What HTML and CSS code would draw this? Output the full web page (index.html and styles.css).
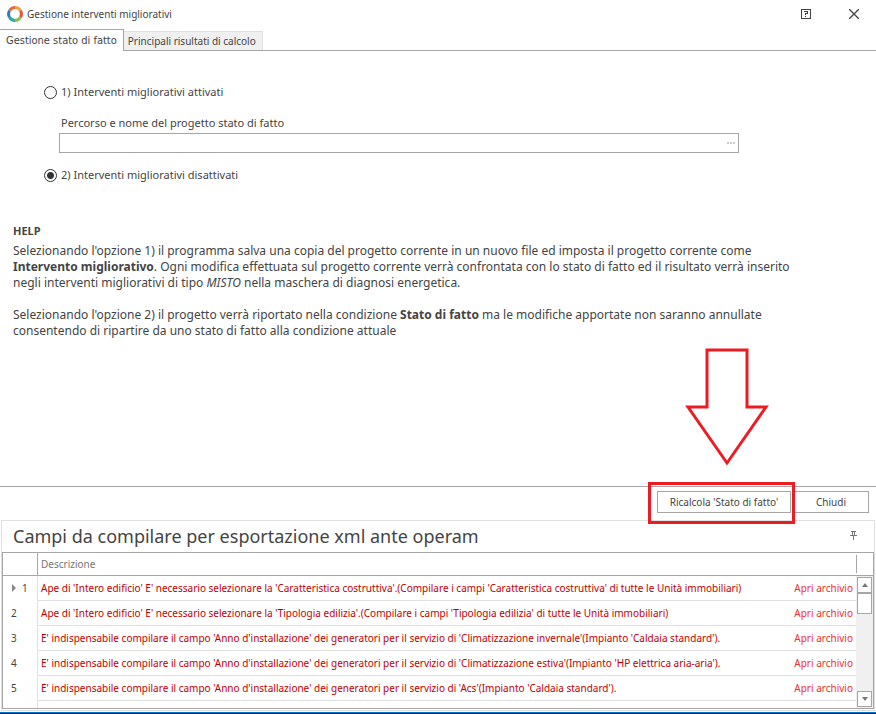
FILE: index.html
```html
<!DOCTYPE html>
<html lang="it">
<head>
<meta charset="UTF-8">
<meta name="viewport" content="width=device-width, initial-scale=1.0">
<title>Gestione interventi migliorativi</title>
<link rel="stylesheet" href="styles.css">
</head>
<body>

<header class="titlebar">
  <svg class="logo" width="16" height="16" viewBox="0 0 16 16" fill="none" stroke-width="3">
    <path d="M8 1.6A6.4 6.4 0 0 1 13.5 4.8" stroke="#f0a040"/>
    <path d="M13.5 4.8A6.4 6.4 0 0 1 13.5 11.2" stroke="#e0563c"/>
    <path d="M13.5 11.2A6.4 6.4 0 0 1 8 14.4" stroke="#8cbf4e"/>
    <path d="M8 14.4A6.4 6.4 0 0 1 2.5 11.2" stroke="#2fa8a0"/>
    <path d="M2.5 11.2A6.4 6.4 0 0 1 2.5 4.8" stroke="#2b7fb5"/>
    <path d="M2.5 4.8A6.4 6.4 0 0 1 8 1.6" stroke="#e56a3c"/>
  </svg>
  <h1>Gestione interventi migliorativi</h1>
  <button class="window-button" aria-label="Guida">
    <svg width="10" height="10" viewBox="0 0 10 10" fill="#444" shape-rendering="crispEdges">
      <path d="M0 0H10V10H0ZM1 1V9H9V1Z" fill-rule="evenodd"/>
      <path d="M3 2H7V5H5V6H4V4H6V3H3ZM4 7H5V8H4Z"/>
    </svg>
  </button>
  <button class="window-button" aria-label="Chiudi finestra">
    <svg width="10" height="10" viewBox="0 0 10 10" stroke="#444" stroke-width="1.3">
      <path d="M0 0L10 10M10 0L0 10"/>
    </svg>
  </button>
</header>

<nav class="tabs" role="tablist">
  <button class="tab active" role="tab" aria-selected="true">Gestione stato di fatto</button>
  <button class="tab" role="tab" aria-selected="false">Principali risultati di calcolo</button>
</nav>

<main>
  <form class="options">
    <label class="option"><input type="radio" name="interventi" value="1"> 1) Interventi migliorativi attivati</label>
    <div class="field">
      <label for="percorso">Percorso e nome del progetto stato di fatto</label>
      <div class="path-box">
        <input type="text" id="percorso">
        <button type="button" aria-label="Sfoglia">
          <svg width="8" height="2" viewBox="0 0 8 2" fill="#ccc"><path d="M0 0H2V2H0ZM3 0H5V2H3ZM6 0H8V2H6Z"/></svg>
        </button>
      </div>
    </div>
    <label class="option"><input type="radio" name="interventi" value="2" checked> 2) Interventi migliorativi disattivati</label>
  </form>

  <section class="help">
    <h2>HELP</h2>
    <p>Selezionando l'opzione 1) il programma salva una copia del progetto corrente in un nuovo file ed imposta il progetto corrente come<br>
    <strong>Intervento migliorativo</strong>. Ogni modifica effettuata sul progetto corrente verrà confrontata con lo stato di fatto ed il risultato verrà inserito<br>
    negli interventi migliorativi di tipo <em>MISTO</em> nella maschera di diagnosi energetica.</p>
    <p>Selezionando l'opzione 2) il progetto verrà riportato nella condizione <strong>Stato di fatto</strong> ma le modifiche apportate non saranno annullate<br>
    consentendo di ripartire da uno stato di fatto alla condizione attuale</p>
  </section>
</main>

<div class="actions">
  <div class="highlight">
    <svg class="arrow" width="84" height="118" viewBox="0 0 84 118" fill="none" stroke="#ed1c24" stroke-width="3">
      <path d="M22 2H62V59H81L42 115L3 59H22Z"/>
    </svg>
    <button class="action recalc">Ricalcola 'Stato di fatto'</button>
  </div>
  <button class="action">Chiudi</button>
</div>

<section class="panel">
  <div class="panel-header">
    <h2>Campi da compilare per esportazione xml ante operam</h2>
    <button class="pin" aria-label="Blocca pannello">
      <svg width="7" height="9" viewBox="0 0 7 9" fill="#777" shape-rendering="crispEdges">
        <path d="M1 0H6V1H5V4H7V5H4V9H3V5H0V4H2V1H1ZM3 1V4H4V1Z" fill-rule="evenodd"/>
      </svg>
    </button>
  </div>
  <div class="grid">
    <table>
      <thead>
        <tr><th class="num"></th><th class="desc">Descrizione</th><th class="link"></th><th class="gutter"></th></tr>
      </thead>
      <tbody>
        <tr>
          <td class="num current">1</td>
          <td>Ape di 'Intero edificio' E' necessario selezionare la 'Caratteristica costruttiva'.(Compilare i campi 'Caratteristica costruttiva' di tutte le Unità immobiliari)</td>
          <td class="link"><a href="#">Apri archivio</a></td><td></td>
        </tr>
        <tr>
          <td class="num">2</td>
          <td>Ape di 'Intero edificio' E' necessario selezionare la 'Tipologia edilizia'.(Compilare i campi 'Tipologia edilizia' di tutte le Unità immobiliari)</td>
          <td class="link"><a href="#">Apri archivio</a></td><td></td>
        </tr>
        <tr>
          <td class="num">3</td>
          <td>E' indispensabile compilare il campo 'Anno d'installazione' dei generatori per il servizio di 'Climatizzazione invernale'(Impianto 'Caldaia standard').</td>
          <td class="link"><a href="#">Apri archivio</a></td><td></td>
        </tr>
        <tr>
          <td class="num">4</td>
          <td>E' indispensabile compilare il campo 'Anno d'installazione' dei generatori per il servizio di 'Climatizzazione estiva'(Impianto 'HP elettrica aria-aria').</td>
          <td class="link"><a href="#">Apri archivio</a></td><td></td>
        </tr>
        <tr>
          <td class="num">5</td>
          <td>E' indispensabile compilare il campo 'Anno d'installazione' dei generatori per il servizio di 'Acs'(Impianto 'Caldaia standard').</td>
          <td class="link"><a href="#">Apri archivio</a></td><td></td>
        </tr>
        <tr>
          <td class="num"></td><td></td><td></td><td></td>
        </tr>
      </tbody>
    </table>
    <div class="scrollbar">
      <button aria-label="Scorri su"><svg width="6" height="4" viewBox="0 0 6 4" fill="#777"><path d="M0 4L3 0L6 4Z"/></svg></button>
      <div class="thumb"></div>
      <button class="down" aria-label="Scorri giù"><svg width="6" height="4" viewBox="0 0 6 4" fill="#777"><path d="M0 0L3 4L6 0Z"/></svg></button>
    </div>
  </div>
</section>

<div class="taskbar"></div>

</body>
</html>
```
FILE: styles.css
```css
* {
  box-sizing: border-box;
}
body {
  display: flex;
  flex-direction: column;
  min-height: 100vh;
  margin: 0;
  font-family: "Noto Sans", Tahoma, sans-serif;
  font-size: 10px;
  line-height: 16px;
  color: #444;
  background-color: #fff;
}
button, input {
  font: inherit;
  color: inherit;
}
button {
  padding: 0;
  border: none;
  background: none;
}
svg {
  display: block;
}
h1, h2, p {
  margin: 0;
}
.titlebar {
  display: flex;
  align-items: center;
  height: 29px;
  padding: 0 10px 1px 7px;
}
.titlebar h1 {
  flex: 1;
  margin-left: 4px;
  font-size: 10px;
  font-weight: normal;
}
.window-button {
  display: flex;
  justify-content: center;
  align-items: center;
  width: 24px;
  height: 24px;
  margin-left: 24px;
}
.tabs {
  display: flex;
  align-items: flex-end;
  height: 22px;
  border-bottom: 1px solid #a6a6a6;
}
.tab {
  height: 19px;
  padding: 0 6px 0 4px;
  border: 1px solid #e0e0e0;
  border-left: none;
  border-bottom: none;
  background-color: #f0f0f0;
}
.tab.active {
  height: 22px;
  margin-bottom: -1px;
  padding: 0 6px;
  border-color: #a6a6a6;
  font-family: "DejaVu Sans Condensed", sans-serif;
  font-size: 11px;
  background-color: #fff;
}
main {
  flex: 1;
  font-size: 11px;
}
.options {
  max-width: 739px;
  padding: 33px 0 0 44px;
}
.option {
  display: flex;
  align-items: center;
  gap: 4px;
}
.option input {
  appearance: none;
  width: 13px;
  height: 13px;
  margin: 0;
  border: 1px solid #333;
  border-radius: 50%;
}
.option input:checked {
  background: radial-gradient(circle, #333 3px, #fff 4px);
}
.field {
  margin: 15px 0 14px 15px;
}
.field label {
  display: block;
  margin: 0 0 2px 2px;
}
.path-box {
  display: flex;
  height: 20px;
  border: 1px solid #a6a6a6;
}
.path-box input {
  flex: 1;
  min-width: 0;
  padding: 0 4px;
  border: none;
  outline: none;
}
.path-box button {
  padding: 0 3px;
}
.help {
  padding: 40px 13px;
  font-size: 12px;
}
.help h2 {
  margin-bottom: 4px;
  font-size: 11px;
}
.help p {
  margin-bottom: 16px;
}
.actions {
  display: flex;
  justify-content: flex-end;
  height: 34px;
  padding: 4px 7px 0 0;
  border-top: 1px solid #a6a6a6;
}
.action {
  width: 76px;
  height: 22px;
  border: 1px solid #a6a6a6;
  background-color: #fff;
}
.action.recalc {
  width: 134px;
}
.highlight {
  position: relative;
  height: 22px;
  margin-right: 2px;
}
.highlight::after {
  content: "";
  position: absolute;
  inset: -9px -4px -11px -9px;
  border: 3px solid #ed1c24;
}
.arrow {
  position: absolute;
  left: 28px;
  bottom: 47px;
}
.panel {
  margin: 0 1px;
  padding-bottom: 1px;
  border: 1px solid #e0e0e0;
}
.panel-header {
  display: flex;
  justify-content: space-between;
  align-items: center;
  height: 31px;
  padding: 0 17px 2px 11px;
}
.panel-header h2 {
  font-size: 18px;
  font-weight: normal;
}
.grid {
  position: relative;
  height: 157px;
  border: 1px solid #a6a6a6;
  overflow: hidden;
}
table {
  width: 100%;
  table-layout: fixed;
  border-collapse: separate;
  border-spacing: 0;
}
th {
  height: 23px;
  padding: 0 3px;
  border-bottom: 1px solid #a6a6a6;
  color: #777;
  font-weight: normal;
  text-align: left;
}
td {
  height: 25px;
  padding: 0 3px;
  border-bottom: 1px solid #e0e0e0;
  color: #c00000;
  white-space: nowrap;
}
.num {
  width: 35px;
  border-right: 1px solid #a6a6a6;
}
td.num {
  padding-left: 8px;
  border-color: #fff #e0e0e0;
  color: #444;
}
td.current {
  padding-left: 9px;
}
.current::before {
  content: "";
  display: inline-block;
  margin-right: 6px;
  border: 4px solid transparent;
  border-left: 4px solid #888;
  border-right: none;
}
.link {
  width: 70px;
  text-align: right;
}
.link a {
  color: #f03030;
  text-decoration: none;
}
.gutter {
  width: 17px;
  background: linear-gradient(#a6a6a6, #a6a6a6) 0 center / 1px 18px no-repeat;
}
.scrollbar {
  position: absolute;
  top: 23px;
  right: 0;
  bottom: 0;
  display: flex;
  flex-direction: column;
  width: 17px;
  padding: 1px;
  background-color: #f0f0f0;
}
.scrollbar button {
  display: flex;
  justify-content: center;
  align-items: center;
  height: 16px;
  border: 1px solid #a6a6a6;
  background-color: #fff;
}
.scrollbar .down {
  margin-top: auto;
}
.thumb {
  height: 21px;
  border: 1px solid #a6a6a6;
  background-color: #fff;
}
.taskbar {
  height: 2px;
  margin-top: 1px;
  border-top: 1px solid #0078d7;
  background-color: #101c24;
}
```
